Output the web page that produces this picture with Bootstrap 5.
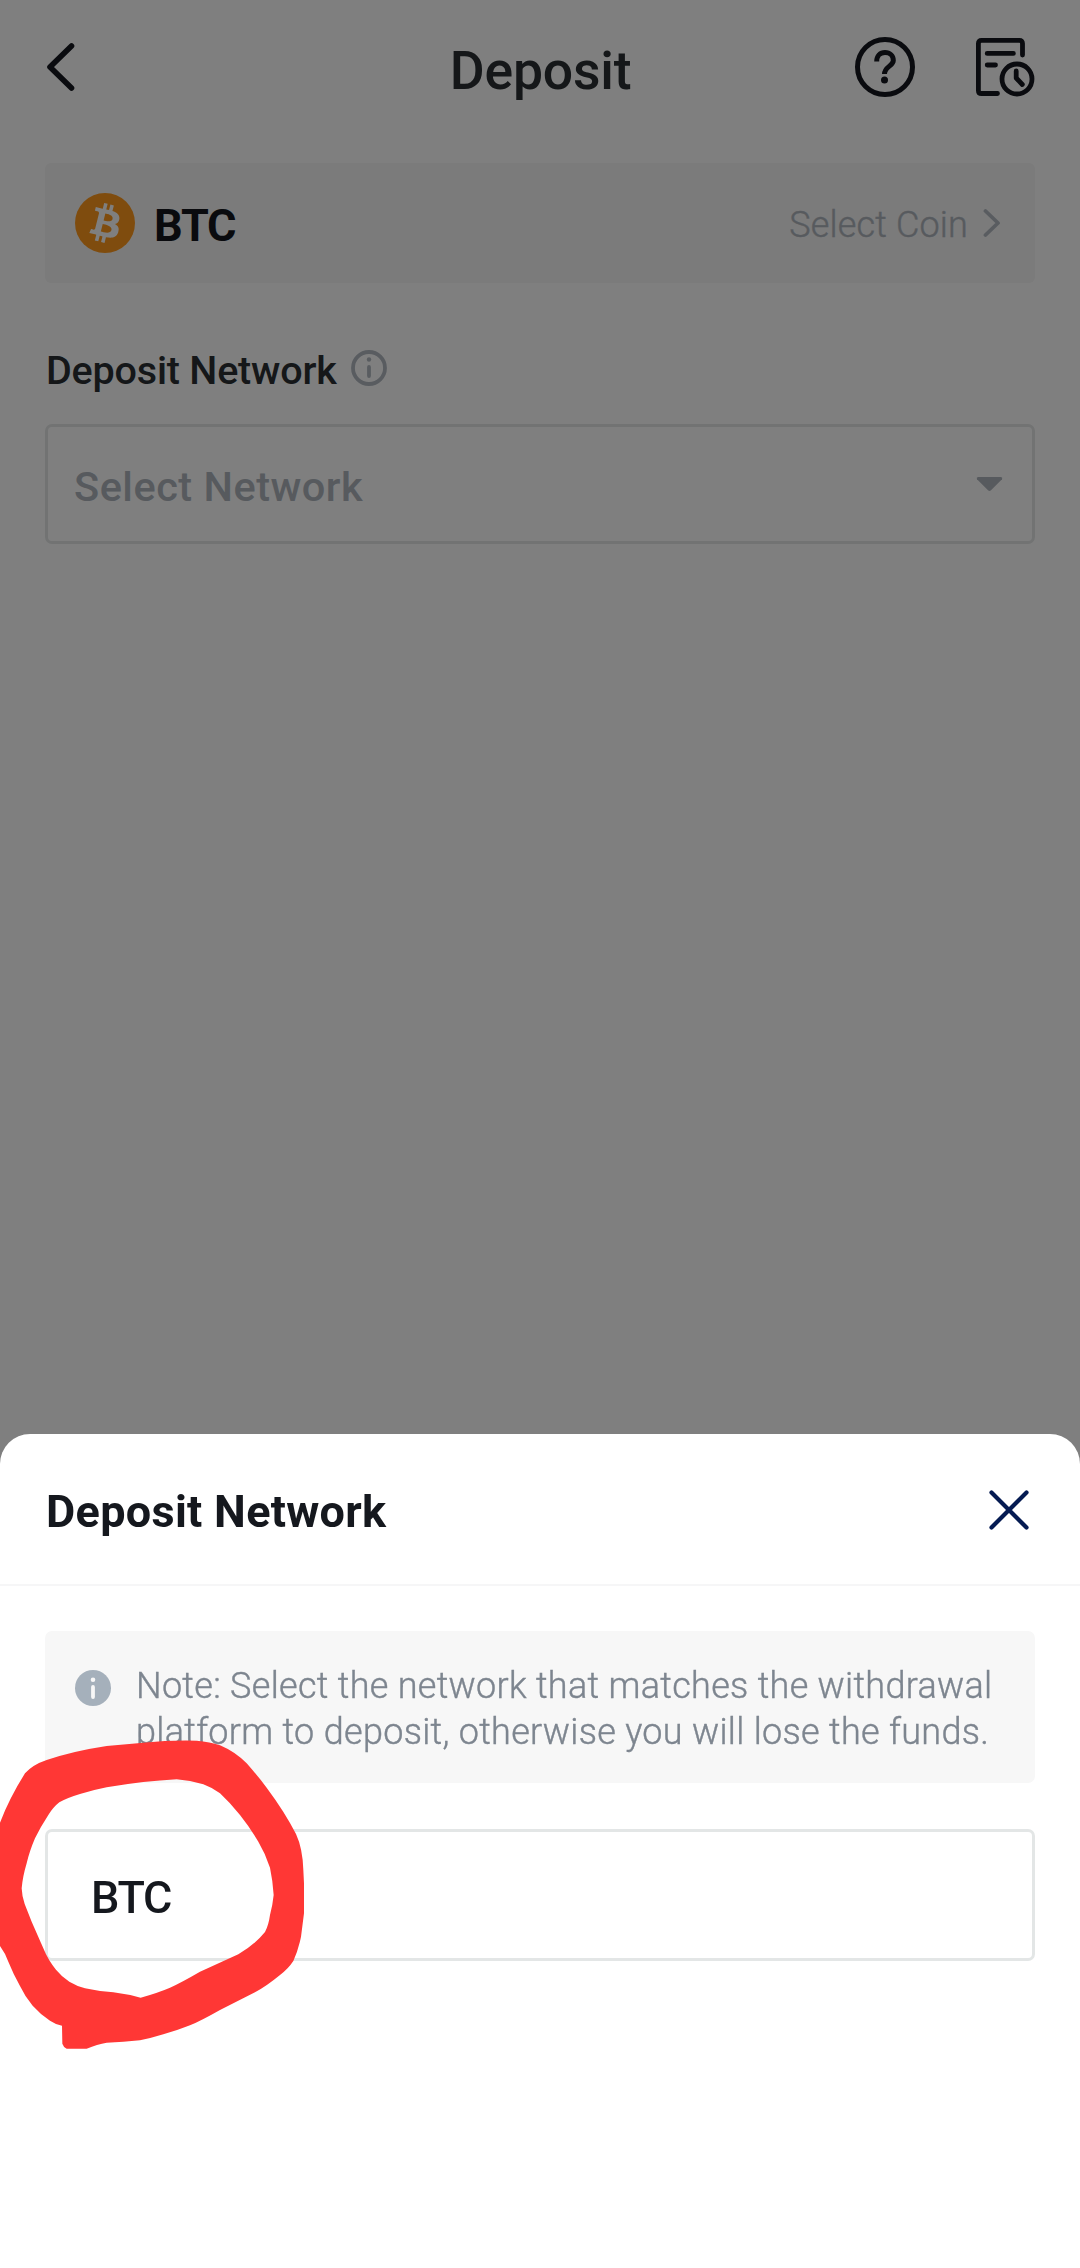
<!DOCTYPE html>
<html lang="en">
<head>
<meta charset="utf-8">
<meta name="viewport" content="width=device-width, initial-scale=1">
<title>Deposit</title>
<link href="https://cdn.jsdelivr.net/npm/bootstrap@5.3.0/dist/css/bootstrap.min.css" rel="stylesheet">
<style>
  body { font-family: Roboto, "Liberation Sans", sans-serif; color: #2a2f33; background: #fff; overflow: hidden; }
  svg { display: block; flex: none; }
  .side-pad { padding-left: 45px; padding-right: 45px; }
  .topbar { height: 141px; padding: 0 44px 7px 45px; }
  .topbar-side { flex: 1 1 0; }
  .topbar-icons { gap: 58px; }
  .topbar-title { font-size: 53.5px; font-weight: 500; letter-spacing: -.2px; line-height: 1; padding-top: 7px; }
  .coin-row { height: 120px; margin-top: 22px; padding: 0 34px 0 30px; background: #f6f6f6; border-radius: 6px; }
  .coin-name { font-size: 45px; font-weight: 700; letter-spacing: -1.2px; line-height: 1; color: #14161c; margin-left: 19px; padding-top: 5px; }
  .coin-pick { font-size: 36px; font-weight: 300; -webkit-text-stroke: .4px; letter-spacing: .15px; line-height: 1; color: #aeb5bd; margin-right: 15px; padding-top: 3px; }
  .field-label { font-size: 39.5px; font-weight: 500; letter-spacing: -.2px; line-height: 1; padding: 5px 0 0 1px; margin-right: 14px; }
  .label-row { height: 50px; margin-top: 60px; margin-bottom: 31px; }
  .net-select { height: 120px; border: 3px solid #e4e7e7; border-radius: 7px; padding: 0 29px 0 26px; }
  .net-select-text { font-size: 41.5px; font-weight: 500; letter-spacing: .5px; line-height: 1; color: #aeb5bd; padding-top: 6px; }
  .offcanvas.net-sheet { --bs-offcanvas-height: 834px; --bs-offcanvas-bg: #fff; border: 0; border-radius: 30px 30px 0 0; color: #15181e; }
  .sheet-head { height: 152px; border-bottom: 2px solid #f6f6f7; padding-right: 49px; padding-top: 2px; }
  .sheet-title { font-size: 45px; font-weight: 700; letter-spacing: .3px; line-height: 1; padding: 3px 0 0 1px; }
  .note-box { height: 152px; margin-top: 45px; background: #f7f7f7; border-radius: 7px; padding: 32px 30px 0; color: #7d858f; font-size: 36px; font-weight: 300; -webkit-text-stroke: .4px; line-height: 46px; letter-spacing: .3px; }
  .note-box svg { margin: 7px 25px 0 0; }
  .net-option { height: 132px; margin-top: 46px; border: 3px solid #e3e6e6; border-radius: 7px; padding-left: 43px; font-size: 45px; font-weight: 500; letter-spacing: -1.3px; line-height: 1; padding-top: 5px; }
  .marker { left: 0; top: 166px; pointer-events: none; }
</style>
<script src="https://cdn.jsdelivr.net/npm/bootstrap@5.3.0/dist/js/bootstrap.bundle.min.js"></script>
</head>
<body>

<header class="topbar d-flex align-items-center">
  <div class="topbar-side d-flex">
    <svg width="32" height="52" viewBox="0 0 32 52" fill="none" stroke="#14171e" stroke-width="5.600" stroke-linecap="round" stroke-linejoin="round"><path d="M26.500 5 5 26 26.500 47"/></svg>
  </div>
  <h1 class="topbar-title m-0">Deposit</h1>
  <div class="topbar-side topbar-icons d-flex justify-content-end">
    <svg width="62" height="62" viewBox="0 0 62 62" fill="none" stroke="#14171e" stroke-width="5"><circle cx="31" cy="31" r="27.500"/><path d="M22.700 25.500C22.700 20 26 16.600 31 16.600S39.300 20 39.300 24.500C39.300 30 30.500 30.500 30.500 38"/><circle cx="30.500" cy="44" r="3.500" fill="#14171e" stroke="none"/></svg>
    <svg width="62" height="62" viewBox="0 0 62 62" fill="none" stroke="#14171e" stroke-width="4.800" stroke-linecap="round" stroke-linejoin="round"><path d="M48.500 19V7.500Q48.500 4.400 45.400 4.400H7.500Q4.400 4.400 4.400 7.500V54.400Q4.400 57.500 7.500 57.500H23.500M13.200 17.400H39.400M13.200 29H21.500M42.200 35V42L48.300 48.500"/><circle cx="43" cy="43" r="15"/></svg>
  </div>
</header>

<main class="side-pad">
  <div class="coin-row d-flex align-items-center">
    <svg width="60" height="60" viewBox="1 1 30 30"><circle cx="16" cy="16" r="15" fill="#ff991c"/><path fill="#fff" d="M23.189 14.020c.314-2.096-1.283-3.223-3.465-3.975l.708-2.840-1.728-.430-.690 2.765c-.454-.114-.920-.220-1.385-.326l.695-2.783L15.596 6l-.708 2.839c-.376-.086-.746-.170-1.104-.260l.002-.009-2.384-.595-.460 1.846s1.283.294 1.256.312c.700.175.826.638.805 1.006l-.806 3.235c.048.012.110.030.180.057l-.183-.045-1.130 4.532c-.086.212-.303.531-.793.410.018.025-1.256-.313-1.256-.313l-.858 1.978 2.250.561c.418.105.828.215 1.231.318l-.715 2.872 1.727.430.708-2.840c.472.127.930.245 1.378.357l-.706 2.828 1.728.430.715-2.866c2.948.558 5.164.333 6.097-2.333.752-2.146-.037-3.385-1.588-4.192 1.130-.260 1.980-1.003 2.207-2.538zm-3.950 5.538c-.533 2.147-4.148.986-5.320.695l.950-3.805c1.172.293 4.929.872 4.370 3.110zm.535-5.569c-.487 1.953-3.495.960-4.470.717l.860-3.450c.975.243 4.118.696 3.610 2.733z"/></svg>
    <span class="coin-name">BTC</span>
    <span class="coin-pick ms-auto">Select Coin</span>
    <svg width="18" height="30" viewBox="0 0 18 30" fill="none" stroke="#b2b9c1" stroke-width="3.800" stroke-linecap="round" stroke-linejoin="round"><path d="M2.500 3 15 15 2.500 27"/></svg>
  </div>

  <div class="label-row d-flex align-items-center">
    <span class="field-label">Deposit Network</span>
    <svg width="36" height="36" viewBox="0 0 36 36" fill="none" stroke="#b2b9c1"><circle cx="18" cy="18" r="16" stroke-width="3.800"/><path d="M18 17V26" stroke-width="3.800" stroke-linecap="round"/><circle cx="18" cy="9.500" r="2.200" fill="#b2b9c1" stroke="none"/></svg>
  </div>

  <div class="net-select d-flex align-items-center justify-content-between">
    <span class="net-select-text">Select Network</span>
    <svg width="27" height="16" viewBox="0 0 27 16"><path fill="#aeb5bd" d="M2 1H25Q27 1.500 26 3.200L15 14.200Q13.500 15.600 12 14.200L1 3.200Q0 1.500 2 1Z"/></svg>
  </div>
</main>

<div class="offcanvas-backdrop show"></div>

<section class="offcanvas offcanvas-bottom show net-sheet" data-bs-backdrop="false" aria-label="Deposit Network">
  <div class="sheet-head side-pad d-flex align-items-center justify-content-between flex-shrink-0">
    <h2 class="sheet-title m-0">Deposit Network</h2>
    <svg width="44" height="44" viewBox="0 0 44 44" stroke="#051b52" stroke-width="4.200" stroke-linecap="round"><path d="M4.500 4.500 39.500 39.500M39.500 4.500 4.500 39.500"/></svg>
  </div>
  <div class="side-pad">
    <div class="note-box d-flex align-items-start">
      <svg width="36" height="36" viewBox="0 0 36 36"><circle cx="18" cy="18" r="18" fill="#a5b0bb"/><circle cx="18" cy="9.800" r="2.300" fill="#f7f7f7"/><path d="M18 17V27" stroke="#f7f7f7" stroke-width="3.800" stroke-linecap="round"/></svg>
      <div class="text-nowrap">Note: Select the network that matches the withdrawal<br>platform to deposit, otherwise you will lose the funds.</div>
    </div>
    <div class="net-option d-flex align-items-center">BTC</div>
  </div>
  <svg class="marker position-absolute" width="360" height="460" viewBox="0 0 1080 1380"><path fill="#ff3735" fill-rule="evenodd" d="M-10 690L0 668Q28 595 75 520Q98 494 140 480Q220 453 320 438L430 428Q510 420 590 422Q630 425 660 436Q705 455 740 490Q775 530 800 563Q855 637 888 702Q908 745 910 810L912 850V940L903 1010Q895 1050 880 1083Q865 1106 840 1125Q800 1158 765 1177L660 1230Q600 1264 570 1276Q530 1292 490 1303Q455 1314 420 1321Q370 1326 320 1328Q292 1332 260 1346H200Q190 1341 187 1331L186 1277Q166 1273 150 1262Q120 1242 98 1217Q75 1190 60 1158Q40 1122 25 1085Q15 1055 -10 1025ZM530 538Q480 541 430 546Q370 553 320 562Q275 571 240 582Q200 594 178 607Q160 621 145 645Q122 680 105 715Q88 755 80 790Q68 830 65 865Q66 890 74 912L95 965L130 1045Q145 1082 168 1109Q185 1130 208 1145Q230 1158 255 1165Q295 1174 340 1177Q385 1183 422 1193Q475 1178 510 1163Q545 1147 600 1115L715 1063Q765 1033 795 996Q806 975 810 945Q818 915 821 885Q818 840 810 803Q797 762 775 725Q748 680 720 645Q690 608 660 580Q635 562 610 553Q570 541 530 538Z"/></svg>
</section>

</body>
</html>
